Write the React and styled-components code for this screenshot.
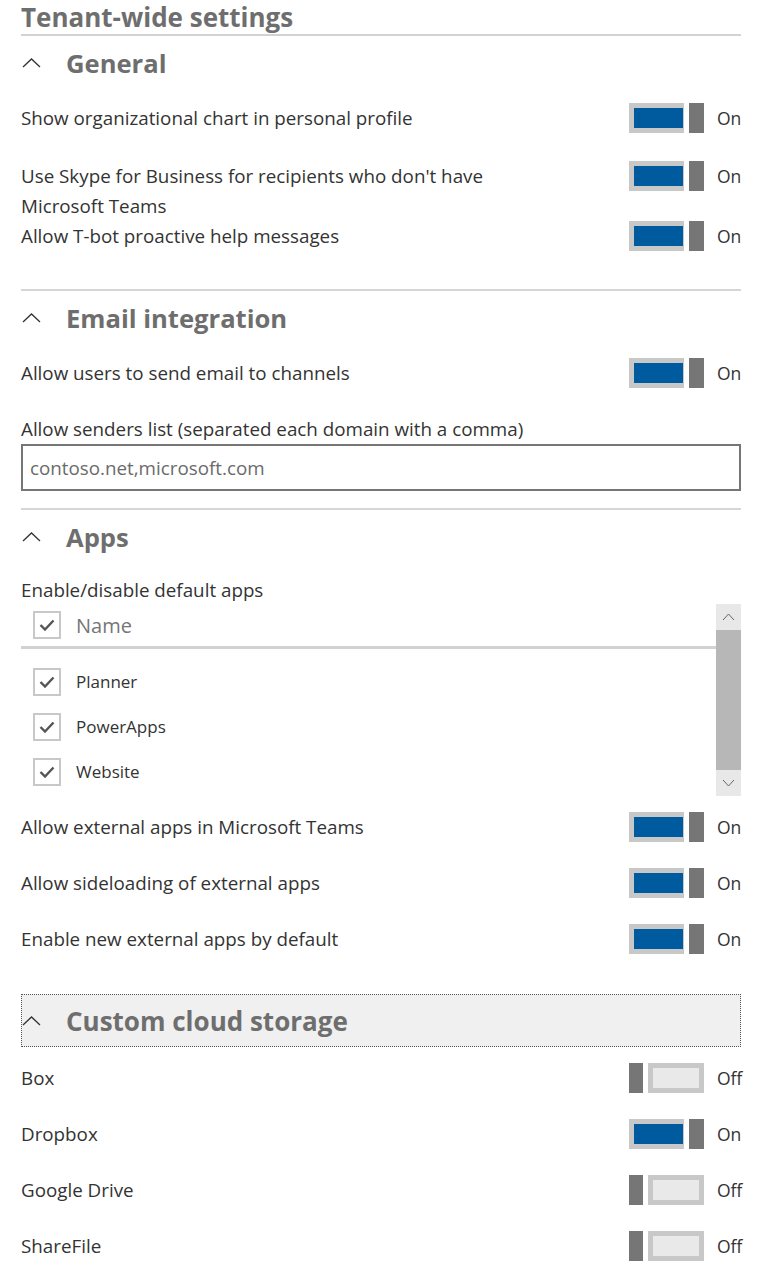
import React from 'react'
import styled, { createGlobalStyle } from 'styled-components'

const Global = createGlobalStyle`
body {
    margin: 0;
    background: #fff;
    font-family: "Open Sans", "Noto Sans", sans-serif;
    color: #333;
}
`

const Page = styled.div`
width: 720px;
padding: 0 20px 0 21px;
`

const Title = styled.h1`
margin: 0;
height: 34px;
line-height: 34px;
font-size: 26px;
font-weight: 700;
color: #6e6e6e;
border-bottom: 2px solid #d2d2d2;
`

const Section = styled.section`
border-top: ${p => (p.$first ? 'none' : '2px solid #d6d6d6')};
padding-bottom: ${p => p.$pad || 0}px;
`

const Header = styled.div`
display: flex;
align-items: center;
height: 54px;
margin-bottom: 13px;
font-size: 25.6px;
font-weight: 700;
color: #6e6e6e;
`

const FocusHeader = styled(Header)`
height: 51px;
margin: 14px 0 16px;
border: 1px dotted #555;
background: #f0f0f0;
font-size: 26px;
`

const Caret = styled.svg`
width: 19px;
height: 10px;
margin: 0 25px 0 ${p => (p.$boxed ? 0 : 1)}px;
flex-shrink: 0;
`

const Row = styled.div`
display: flex;
align-items: flex-start;
justify-content: space-between;
height: ${p => p.$h || 56}px;
`

const Label = styled.div`
max-width: 500px;
font-size: 18.8px;
line-height: 30px;
`

const Control = styled.div`
display: flex;
align-items: center;
height: 30px;
`

const Switch = styled.div`
display: flex;
gap: 5px;
width: 75px;
height: 30px;
margin-right: 13px;
`

const Track = styled.div`
box-sizing: border-box;
width: ${p => (p.$on ? 55 : 56)}px;
height: 30px;
border: 5px solid #c8c8c8;
border-right-width: ${p => (p.$on ? 1 : 5)}px;
background: ${p => (p.$on ? '#005a9e' : '#e9e9e9')};
`

const Thumb = styled.div`
width: ${p => (p.$on ? 15 : 14)}px;
height: 30px;
background: #767676;
`

const State = styled.span`
width: 24px;
white-space: nowrap;
font-size: 17.5px;
color: #333;
`

const FieldLabel = styled.div`
font-size: 18.8px;
line-height: 30px;
height: 30px;
`

const TextBox = styled.input`
display: block;
box-sizing: border-box;
width: 100%;
height: 47px;
margin: 0 0 17px;
padding: 0 7px;
border: 2px solid #767676;
font-family: inherit;
font-size: 18.8px;
color: #333;
outline: none;

&::placeholder {
    color: #6b6b6b;
}
`

const AppsLabel = styled(FieldLabel)`
height: 27px;
line-height: 27px;
`

const List = styled.div`
display: flex;
height: 192px;
margin-bottom: 16px;
`

const ListBody = styled.div`
flex: 1;
`

const ListHead = styled.div`
display: flex;
align-items: center;
height: 42px;
padding-left: 12px;
border-bottom: 3px solid #d2d2d2;
font-size: 20px;
color: #767676;
`

const Items = styled.div`
padding-top: 10px;
`

const Item = styled.div`
display: flex;
align-items: center;
height: 45px;
padding-left: 12px;
font-size: 17px;
color: #333;
`

const Box = styled.div`
box-sizing: border-box;
display: flex;
align-items: center;
justify-content: center;
width: 28px;
height: 28px;
margin-right: 15px;
border: 2px solid #c8c8c8;
background: #fff;
`

const Scrollbar = styled.div`
display: flex;
flex-direction: column;
width: 25px;
`

const ScrollBtn = styled.div`
display: flex;
align-items: center;
justify-content: center;
height: 26px;
background: #e8e8e8;
`

const ScrollThumb = styled.div`
flex: 1;
background: #b7b7b7;
`

const Chevron = ({ boxed }) => (
    <Caret $boxed={boxed} viewBox="0 0 19 10">
        <polyline points="1,9 9.5,1 18,9" fill="none" stroke="#333" strokeWidth="1.3" />
    </Caret>
)

const SectionHead = ({ children, focus }) => {
    const H = focus ? FocusHeader : Header
    return (
        <H>
            <Chevron boxed={focus} />
            {children}
        </H>
    )
}

const Toggle = ({ on }) => (
    <Control>
        <Switch>
            {on ? <><Track $on /><Thumb $on /></> : <><Thumb /><Track /></>}
        </Switch>
        <State>{on ? 'On' : 'Off'}</State>
    </Control>
)

const Setting = ({ label, on = true, h }) => (
    <Row $h={h}>
        <Label>{label}</Label>
        <Toggle on={on} />
    </Row>
)

const Check = () => (
    <Box>
        <svg width="16" height="12" viewBox="0 0 16 12">
            <polyline points="1.5,6 6,10.5 14.5,1.5" fill="none" stroke="#555" strokeWidth="2.4" />
        </svg>
    </Box>
)

const Arrow = ({ down }) => (
    <svg width="13" height="8" viewBox="0 0 13 8">
        <polyline points={down ? '1,1 6.5,7 12,1' : '1,7 6.5,1 12,7'} fill="none" stroke="#666" strokeWidth="1" />
    </svg>
)

const apps = ['Planner', 'PowerApps', 'Website']

const App = () => {
    return (
        <Page>
            <Global />
            <Title>Tenant-wide settings</Title>

            <Section $first $pad={10}>
                <SectionHead>General</SectionHead>
                <Setting h={58} label="Show organizational chart in personal profile" />
                <Setting h={60} label="Use Skype for Business for recipients who don't have Microsoft Teams" />
                <Setting h={58} label="Allow T-bot proactive help messages" />
            </Section>

            <Section>
                <SectionHead>Email integration</SectionHead>
                <Setting label="Allow users to send email to channels" />
                <FieldLabel>Allow senders list (separated each domain with a comma)</FieldLabel>
                <TextBox placeholder="contoso.net,microsoft.com" />
            </Section>

            <Section>
                <SectionHead>Apps</SectionHead>
                <AppsLabel>Enable/disable default apps</AppsLabel>
                <List>
                    <ListBody>
                        <ListHead>
                            <Check />
                            Name
                        </ListHead>
                        <Items>
                            {apps.map(a => (
                                <Item key={a}>
                                    <Check />
                                    {a}
                                </Item>
                            ))}
                        </Items>
                    </ListBody>
                    <Scrollbar>
                        <ScrollBtn><Arrow /></ScrollBtn>
                        <ScrollThumb />
                        <ScrollBtn><Arrow down /></ScrollBtn>
                    </Scrollbar>
                </List>
                <Setting label="Allow external apps in Microsoft Teams" />
                <Setting label="Allow sideloading of external apps" />
                <Setting label="Enable new external apps by default" />
            </Section>

            <div>
                <SectionHead focus>Custom cloud storage</SectionHead>
                <Setting label="Box" on={false} />
                <Setting label="Dropbox" />
                <Setting label="Google Drive" on={false} />
                <Setting label="ShareFile" on={false} />
            </div>
        </Page>
    )
}

export default App
